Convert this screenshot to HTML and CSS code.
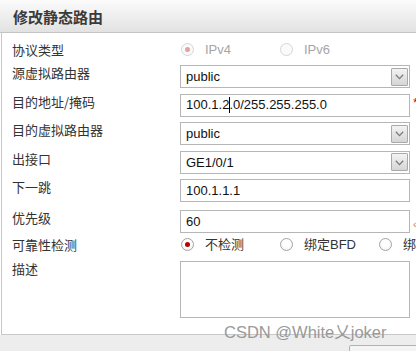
FILE: index.html
```html
<!DOCTYPE html>
<html lang="zh-CN">
<head>
<meta charset="utf-8">
<title>修改静态路由</title>
<link rel="stylesheet" href="styles.css">
</head>
<body>
<div class="dialog">
  <div class="hd">修改静态路由</div>
  <div class="bd">
    <div class="row row-proto">
      <div class="lbl">协议类型</div>
      <div class="opts">
        <span class="opt disabled"><i class="radio on"></i>IPv4</span>
        <span class="opt disabled"><i class="radio"></i>IPv6</span>
      </div>
    </div>
    <div class="row">
      <div class="lbl">源虚拟路由器</div>
      <div class="field select"><span class="val">public</span><span class="arrow"><svg width="9" height="6" viewBox="0 0 9 6"><polyline points="0.8,0.8 4.5,4.6 8.2,0.8" fill="none" stroke="#7a7a7a" stroke-width="1.3"/></svg></span></div>
    </div>
    <div class="row">
      <div class="lbl">目的地址/掩码</div>
      <div class="field"><span class="val">100.1.2<span class="caret"></span>.0/255.255.255.0</span></div>
      <span class="req">*</span>
    </div>
    <div class="row">
      <div class="lbl">目的虚拟路由器</div>
      <div class="field select"><span class="val">public</span><span class="arrow"><svg width="9" height="6" viewBox="0 0 9 6"><polyline points="0.8,0.8 4.5,4.6 8.2,0.8" fill="none" stroke="#7a7a7a" stroke-width="1.3"/></svg></span></div>
    </div>
    <div class="row">
      <div class="lbl">出接口</div>
      <div class="field select"><span class="val">GE1/0/1</span><span class="arrow"><svg width="9" height="6" viewBox="0 0 9 6"><polyline points="0.8,0.8 4.5,4.6 8.2,0.8" fill="none" stroke="#7a7a7a" stroke-width="1.3"/></svg></span></div>
    </div>
    <div class="row">
      <div class="lbl">下一跳</div>
      <div class="field"><span class="val">100.1.1.1</span></div>
    </div>
    <div class="row row-prio">
      <div class="lbl">优先级</div>
      <div class="field"><span class="val">60</span></div>
      <span class="hint">‹</span>
    </div>
    <div class="row row-radio">
      <div class="lbl">可靠性检测</div>
      <div class="opts">
        <span class="opt"><i class="radio on"></i>不检测</span>
        <span class="opt"><i class="radio"></i>绑定BFD</span>
        <span class="opt"><i class="radio"></i>绑定NQA</span>
      </div>
    </div>
    <div class="row">
      <div class="lbl">描述</div>
      <div class="field ta"></div>
    </div>
  </div>
  <div class="ft"><span class="btn"></span></div>
  <div class="wm">CSDN @White乂joker</div>
</div>
</body>
</html>
```

FILE: styles.css
```css
html, body {
  margin: 0;
  padding: 0;
}
body {
  width: 416px;
  height: 351px;
  overflow: hidden;
  background: #fff;
  font-family: "Liberation Sans", "Noto Sans CJK SC", sans-serif;
  font-size: 13px;
  color: #333;
}
.dialog {
  position: relative;
  width: 416px;
  height: 351px;
}
.hd {
  height: 32px;
  line-height: 33px;
  padding-left: 13px;
  border-bottom: 1px solid #c4c4c4;
  background: linear-gradient(#fbfbfb, #e2e2e2);
  font-family: "Noto Sans CJK SC", sans-serif;
  font-weight: bold;
  font-size: 15px;
  color: #3a3a3a;
}
.bd {
  margin-left: 1px;
  border-left: 1px solid #c8c8c8;
  border-bottom: 1px solid #c8c8c8;
  padding: 4px 0 16px 10px;
  height: 281px;
}
.row {
  display: flex;
  align-items: flex-start;
  height: 28.5px;
}
.row-proto {
  height: 25px;
  align-items: center;
}
.row-prio {
  margin-top: 2.5px;
}
.row-radio {
  height: 18px;
  align-items: center;
  margin-bottom: 4.5px;
}
.lbl {
  width: 168px;
  flex: none;
  font-family: "Noto Sans CJK SC", sans-serif;
  font-size: 13px;
  line-height: 17px;
  padding-top: 2px;
  color: #333;
}
.row-proto .lbl, .row-radio .lbl {
  padding-top: 0;
}
.field {
  box-sizing: border-box;
  width: 230px;
  height: 23px;
  margin-top: 3px;
  border: 1px solid #b6b6b6;
  background: #fff;
  display: flex;
  align-items: center;
  padding-left: 5px;
  flex: none;
}
.val {
  font-family: "Liberation Sans", sans-serif;
  font-size: 13px;
  color: #111;
  white-space: nowrap;
}
.caret {
  display: inline-block;
  width: 1px;
  height: 16px;
  margin-right: -1px;
  background: #000;
  vertical-align: -4px;
}
.arrow {
  margin-left: auto;
  margin-right: 1px;
  box-sizing: border-box;
  width: 17px;
  height: 18px;
  border: 1px solid #a9a9a9;
  border-radius: 1px;
  background: linear-gradient(#f3f3f3, #d5d5d5);
  display: flex;
  align-items: center;
  justify-content: center;
}
.arrow svg {
  display: block;
  margin-top: 1px;
}
.ta {
  height: 57px;
}
.req {
  margin-left: 3px;
  margin-top: 5px;
  color: #e00;
  font-size: 13px;
  line-height: 13px;
}
.hint {
  margin-left: 3px;
  margin-top: 12px;
  color: #d08040;
  font-size: 11px;
  line-height: 11px;
}
.opts {
  display: flex;
  padding-left: 1px;
  white-space: nowrap;
}
.opt {
  width: 99px;
  flex: none;
  display: flex;
  align-items: center;
  font-family: "Liberation Sans", "Noto Sans CJK SC", sans-serif;
  font-size: 13px;
  line-height: 17px;
  color: #333;
}
.opt.disabled {
  color: #a6a6a6;
}
.radio {
  position: relative;
  box-sizing: border-box;
  width: 13px;
  height: 13px;
  margin-right: 11px;
  border-radius: 50%;
  border: 1px solid #a3a3a3;
  background: radial-gradient(circle at 50% 40%, #fff 40%, #ececec 100%);
  flex: none;
}
.radio.on::after {
  content: "";
  position: absolute;
  left: 3px;
  top: 3px;
  width: 5px;
  height: 5px;
  border-radius: 50%;
  background: #b80000;
}
.disabled .radio {
  border-color: #d6d6d6;
  background: #fafafa;
}
.disabled .radio.on::after {
  background: #e3a2a2;
}
.ft {
  height: 16px;
  background: #ededed;
  padding-left: 349px;
  padding-top: 10px;
  box-sizing: border-box;
  overflow: hidden;
}
.btn {
  display: block;
  width: 90px;
  height: 20px;
  box-sizing: border-box;
  border: 1px solid #b3b3b3;
  border-radius: 2px;
  background: #f4f4f4;
}
.wm {
  position: absolute;
  left: 224px;
  top: 322px;
  font-family: "Liberation Sans", "Noto Sans CJK SC", sans-serif;
  font-size: 16.5px;
  line-height: 20px;
  color: #999;
  white-space: nowrap;
}
```
